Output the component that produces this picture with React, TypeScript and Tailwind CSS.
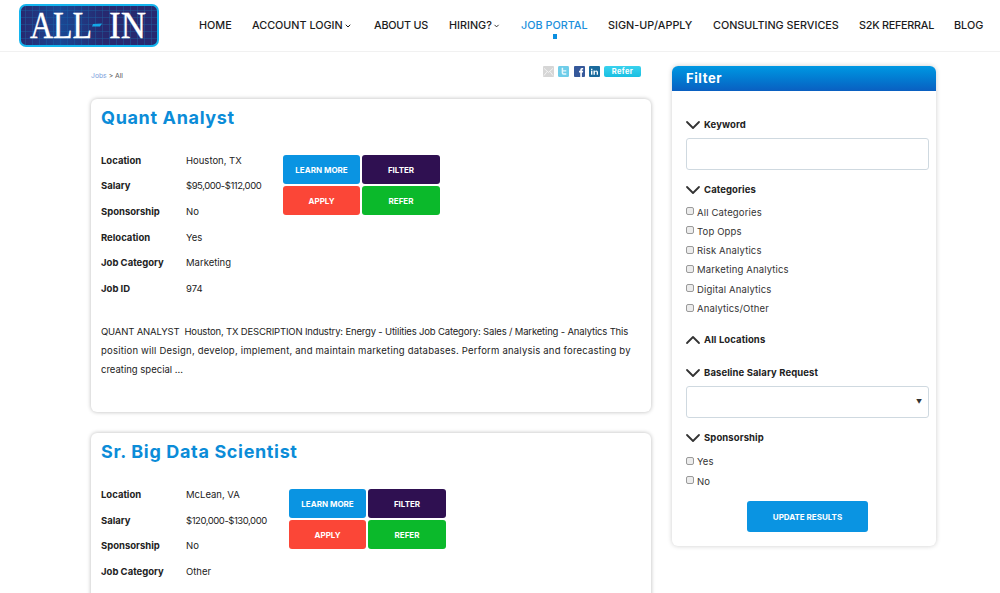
import { ChevronDown, ChevronUp } from "lucide-react";

const font = { fontFamily: "Inter, 'Liberation Sans', sans-serif" };

const navItems = [
  { label: "HOME", w: "w-[32px]" },
  { label: "ACCOUNT LOGIN", w: "w-[101px]", caret: true },
  { label: "ABOUT US", w: "w-[54px]", tight: true },
  { label: "HIRING?", w: "w-[51px]", caret: true },
  { label: "JOB PORTAL", w: "w-[66px]", active: true },
  { label: "SIGN-UP/APPLY", w: "w-[84px]" },
  { label: "CONSULTING SERVICES", w: "w-[125px]" },
  { label: "S2K REFERRAL", w: "w-[74px]", tight: true },
  { label: "BLOG", w: "w-[30px]" },
];

function Logo() {
  return (
    <svg width="140" height="43" viewBox="0 0 140 43" className="block">
      <defs>
        <pattern id="grid" width="7" height="7" patternUnits="userSpaceOnUse">
          <rect width="7" height="7" fill="#27296f" />
          <rect x="6" width="1" height="7" fill="#1f5c9c" opacity="0.5" />
          <rect y="6" width="7" height="1" fill="#1f5c9c" opacity="0.5" />
        </pattern>
        <linearGradient id="glow" x1="0" y1="0" x2="1" y2="0">
          <stop offset="0" stopColor="#0f5fb0" stopOpacity="0" />
          <stop offset="0.3" stopColor="#0f5fb0" stopOpacity="0.55" />
          <stop offset="0.6" stopColor="#0f5fb0" stopOpacity="0" />
        </linearGradient>
      </defs>
      <rect x="1" y="1" width="138" height="41" rx="6" fill="url(#grid)" />
      <rect x="1" y="1" width="138" height="41" rx="6" fill="url(#glow)" stroke="#14b4ee" strokeWidth="2" />
      <text x="11" y="34" fill="#fff" stroke="#fff" strokeWidth="0.3" fontFamily="Liberation Serif, serif" fontSize="37" textLength="62" lengthAdjust="spacingAndGlyphs">
        ALL
      </text>
      <path d="M74 20 L83 19.5 L81 22.5 L73 22.5 Z" fill="#14a8e8" />
      <text x="90" y="34" fill="#fff" stroke="#fff" strokeWidth="0.3" fontFamily="Liberation Serif, serif" fontSize="37" textLength="37" lengthAdjust="spacingAndGlyphs">
        IN
      </text>
    </svg>
  );
}

function Header() {
  return (
    <header className="flex h-[52px] items-start border-b border-[#f1f1f1] bg-white pl-[19px]">
      <div className="mt-[4px] w-[180px] shrink-0">
        <Logo />
      </div>
      <nav className="flex gap-[21px] pt-[19px] text-[10.8px] font-medium leading-[14px] text-[#1c1c1c]">
        {navItems.map((it) => (
          <div
            key={it.label}
            className={`relative flex min-w-0 shrink-0 items-center whitespace-nowrap ${it.w} ${it.active ? "text-[#1c8fdc]" : ""} ${it.tight ? "tracking-[-0.25px]" : ""}`}
          >
            {it.label}
            {it.caret ? <ChevronDown className="ml-[1px] h-[8px] w-[8px]" strokeWidth={3} /> : null}
            {it.active ? <span className="absolute left-[32px] top-[15px] h-[5px] w-[4px] bg-[#0b8fe0]" /> : null}
          </div>
        ))}
      </nav>
    </header>
  );
}

function ShareBar() {
  return (
    <div className="flex h-[25px] items-start justify-between pt-[5px]">
      <div className="pt-[5px] text-[6.8px] leading-[10px]">
        <span className="text-[#7d9fdc]">Jobs</span>
        <span className="text-[#555]"> &gt; All</span>
      </div>
      <div className="mr-[10px] flex items-center gap-[4px]">
        <svg width="11" height="11" viewBox="0 0 12 12">
          <rect width="12" height="12" rx="1" fill="#d6d6d6" />
          <path d="M1 2.5 L6 7 L11 2.5 M1 10.5 L4.5 6 M11 10.5 L7.5 6" fill="none" stroke="#f4f4f4" strokeWidth="1" />
        </svg>
        <svg width="11" height="11" viewBox="0 0 12 12">
          <rect width="12" height="12" rx="1.5" fill="#6fcde9" />
          <path d="M4 2 V7.5 Q4 9.5 6 9.5 H9 V8 H6.5 Q5.6 8 5.6 7 V6 H9 V4.5 H5.6 V2 Z" fill="#e8f8fd" />
        </svg>
        <svg width="11" height="11" viewBox="0 0 12 12" className="ml-[1px]">
          <rect width="12" height="12" rx="1" fill="#35589a" />
          <path d="M6.8 12 V7 H5.5 V5.3 H6.8 V4 Q6.8 2.2 8.6 2.2 H10 V3.9 H9 Q8.6 3.9 8.6 4.4 V5.3 H10 L9.8 7 H8.6 V12 Z" fill="#fff" />
        </svg>
        <svg width="11" height="11" viewBox="0 0 11 12" preserveAspectRatio="none">
          <rect width="11" height="12" rx="1" fill="#1a6a9c" />
          <rect x="2" y="5" width="1.4" height="4.5" fill="#fff" />
          <rect x="2" y="3" width="1.4" height="1.3" fill="#fff" />
          <path d="M4.5 5 H5.8 V5.7 Q6.4 4.9 7.4 4.9 Q9 4.9 9 6.8 V9.5 H7.7 V7 Q7.7 6 6.9 6 Q5.9 6 5.9 7.1 V9.5 H4.5 Z" fill="#fff" />
        </svg>
        <div className="flex h-[11px] w-[37px] items-center justify-center rounded-[2px] bg-gradient-to-b from-[#38d2ee] to-[#18bfe2] text-[7.5px] font-bold tracking-[0.4px] text-white">
          Refer
        </div>
      </div>
    </div>
  );
}

function JobButton({ label, color }: { label: string; color: string }) {
  return (
    <div className={`flex h-[29px] items-center justify-center rounded-[3px] text-[8px] font-bold text-white ${color}`}>
      {label}
    </div>
  );
}

function JobCard({
  title,
  rows,
  children,
  valueW,
}: {
  title: string;
  rows: [string, string][];
  children?: React.ReactNode;
  valueW: string;
}) {
  return (
    <div className="mb-[21px] rounded-[6px] bg-white pl-[10px] pr-[10px] shadow-[0_0_4px_rgba(0,0,0,0.28)]">
      <h2 className="pt-[7px] text-[18px] font-bold leading-[24px] tracking-[0.65px] text-[#0b8cd8]">{title}</h2>
      <div className="mt-[18px] flex">
        <div className="flex flex-col">
          {rows.map(([k, v]) => (
            <div key={k} className="flex h-[25.6px] items-center text-[9.5px] leading-[12px] text-[#222]">
              <div className="w-[85px] shrink-0 font-bold">{k}</div>
              <div className={`${valueW} ${k === "Salary" ? "tracking-[-0.45px]" : ""}`}>{v}</div>
            </div>
          ))}
        </div>
        <div className="ml-[21px] mt-[7px] grid h-fit grid-cols-[77px_78px] gap-x-[2px] gap-y-[2px]">
          <JobButton label="LEARN MORE" color="bg-[#0a94e2]" />
          <JobButton label="FILTER" color="bg-[#2f1051]" />
          <JobButton label="APPLY" color="bg-[#fb4637]" />
          <JobButton label="REFER" color="bg-[#0bb92b]" />
        </div>
      </div>
      {children}
    </div>
  );
}

function SectionLabel({ label, up, className = "" }: { label: string; up?: boolean; className?: string }) {
  const Icon = up ? ChevronUp : ChevronDown;
  return (
    <div className={`flex h-[12px] items-center text-[9.5px] font-bold leading-[12px] tracking-[0.1px] text-[#222] ${className}`}>
      <Icon className="ml-[-5px] mr-[-1px] h-[24px] w-[24px] shrink-0 text-[#333]" strokeWidth={1.8} />
      {label}
    </div>
  );
}

function Check({ label }: { label: string }) {
  return (
    <div className="flex h-[19.3px] items-center text-[9.5px] tracking-[0.15px] text-[#333]">
      <span className="mb-[3px] mr-[3px] h-[8px] w-[8px] rounded-[2px] border border-[#9a9a9a] bg-[#ececec]" />
      <span>{label}</span>
    </div>
  );
}

function Sidebar() {
  return (
    <aside className="mt-[14px] h-[480px] w-[264px] shrink-0 overflow-hidden rounded-[6px] bg-white shadow-[0_0_5px_rgba(0,0,0,0.2)]">
      <div className="flex h-[25px] items-center bg-gradient-to-b from-[#0098e2] to-[#0a5fc1] pl-[14px] text-[13px] font-bold tracking-[0.6px] text-white">
        Filter
      </div>
      <div className="px-[14px] pt-[28px]">
        <SectionLabel label="Keyword" />
        <div className="mr-[-7px] mt-[7px] h-[32px] rounded-[3px] border border-[#cfd9e0]" />
        <SectionLabel label="Categories" className="mt-[14px]" />
        <div className="mt-[7px]">
          {["All Categories", "Top Opps", "Risk Analytics", "Marketing Analytics", "Digital Analytics", "Analytics/Other"].map((c) => (
            <Check key={c} label={c} />
          ))}
        </div>
        <SectionLabel label="All Locations" up className="mt-[15px]" />
        <SectionLabel label="Baseline Salary Request" className="mt-[21px]" />
        <div className="mr-[-7px] mt-[7px] flex h-[32px] items-center justify-end rounded-[3px] border border-[#cfd9e0] pr-[6px] text-[6px] text-[#333]">
          ▼
        </div>
        <SectionLabel label="Sponsorship" className="mt-[14px]" />
        <div className="mt-[9px]">
          <Check label="Yes" />
          <Check label="No" />
        </div>
        <div className="ml-[61px] mt-[10px] flex h-[31px] w-[121px] items-center justify-center rounded-[3px] bg-[#0a94e2] text-[8px] font-bold text-white">
          UPDATE RESULTS
        </div>
      </div>
    </aside>
  );
}

export default function App() {
  return (
    <div className="h-[593px] w-[1000px] overflow-hidden bg-white" style={font}>
      <Header />
      <main className="flex gap-[21px] pl-[91px]">
        <div className="w-[560px] shrink-0 pt-[9px]">
          <ShareBar />
          <div className="mt-[13px]">
            <JobCard
              title="Quant Analyst"
              valueW="w-[76px]"
              rows={[
                ["Location", "Houston, TX"],
                ["Salary", "$95,000-$112,000"],
                ["Sponsorship", "No"],
                ["Relocation", "Yes"],
                ["Job Category", "Marketing"],
                ["Job ID", "974"],
              ]}
            >
              <p className="mt-[20px] pb-[33px] text-[9.5px] leading-[19.3px] text-[#222]">
                <span className="block whitespace-nowrap tracking-[-0.17px]">
                  QUANT ANALYST{"\u00a0 "}Houston, TX DESCRIPTION Industry: Energy - Utilities Job Category: Sales / Marketing - Analytics This
                </span>
                <span className="block whitespace-nowrap tracking-[0.21px]">
                  position will Design, develop, implement, and maintain marketing databases. Perform analysis and forecasting by
                </span>
                <span className="block">creating special ...</span>
              </p>
            </JobCard>
            <JobCard
              title="Sr. Big Data Scientist"
              valueW="w-[82px]"
              rows={[
                ["Location", "McLean, VA"],
                ["Salary", "$120,000-$130,000"],
                ["Sponsorship", "No"],
                ["Job Category", "Other"],
              ]}
            >
              <div className="h-[60px]" />
            </JobCard>
          </div>
        </div>
        <Sidebar />
      </main>
    </div>
  );
}
